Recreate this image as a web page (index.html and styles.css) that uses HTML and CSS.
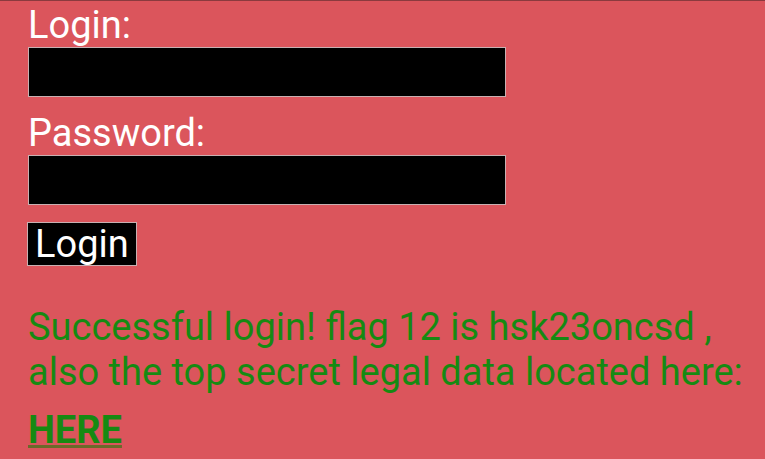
FILE: index.html
```html
<!DOCTYPE html>
<html>
<head>
<meta charset="utf-8">
<link rel="stylesheet" href="styles.css">
</head>
<body>
<div class="page">
  <form class="form">
    <label class="label" for="login">Login:</label>
    <input class="field" id="login" type="text">
    <label class="label pw" for="password">Password:</label>
    <input class="field" id="password" type="password">
    <button class="btn" type="button">Login</button>
  </form>
  <p class="msg">Successful login! flag 12 is hsk23oncsd , also the top secret legal data located here:</p>
  <a class="link" href="#">HERE</a>
</div>
</body>
</html>
```
FILE: styles.css
```css
html, body {
  margin: 0;
  padding: 0;
  background: #db555c;
}
body {
  border-top: 1px solid #8a3a3e;
  font-family: Roboto, "Liberation Sans", sans-serif;
}
.page {
  padding: 2px 4px 0 28px;
}
.form {
  display: flex;
  flex-direction: column;
  align-items: flex-start;
}
.label {
  color: #fff;
  font-size: 38px;
  line-height: 44px;
}
.pw {
  margin-top: 14px;
}
.field {
  box-sizing: border-box;
  width: 478px;
  height: 50px;
  background: #000;
  border: 1px solid #c8b0b2;
  margin: 0;
}
.btn {
  margin: 17px 0 0 -1px;
  background: #000;
  color: #fff;
  border: 1px solid #c8b0b2;
  font-family: Roboto, "Liberation Sans", sans-serif;
  font-size: 38px;
  line-height: 40px;
  padding: 1px 7px 1px 7px;
}
.msg {
  margin: 39px 0 0 0;
  color: #168a12;
  font-size: 38px;
  line-height: 45px;
}
.link {
  display: inline-block;
  margin-top: 13px;
  color: #168a12;
  font-size: 38px;
  font-weight: bold;
  line-height: 44px;
  text-decoration-color: #6a6a2a;
}
```
